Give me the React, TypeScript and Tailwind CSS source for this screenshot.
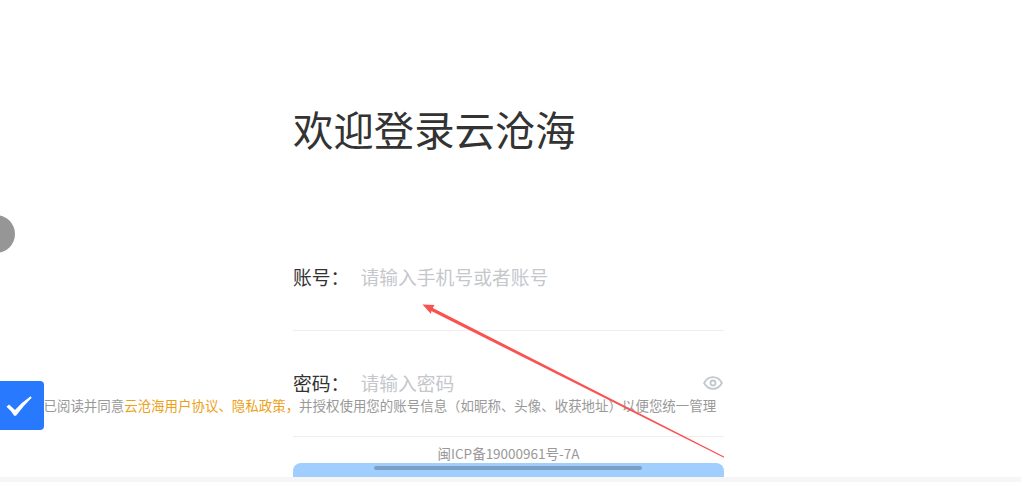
type FieldProps = {
  label: string;
  placeholder: string;
  password?: boolean;
};

function EyeIcon() {
  return (
    <svg className="h-[14px] w-[20px]" viewBox="0 0 20 14" fill="none" stroke="#c3c6cd" strokeWidth="1.8">
      <path d="M1.1 7C3.2 3.200 6.200 1.100 10 1.100S16.800 3.200 18.900 7C16.800 10.800 13.800 12.900 10 12.900S3.200 10.800 1.100 7Z" />
      <circle cx="10" cy="7" r="2.5" />
    </svg>
  );
}

function Field({ label, placeholder, password }: FieldProps) {
  return (
    <label className="flex h-[106px] w-full items-center border-b border-[#eeeeee] text-[18.8px] leading-7">
      <span className="w-[67.500px] shrink-0 whitespace-nowrap text-[#333333]">{label}</span>
      <input
        type={password ? "password" : "text"}
        placeholder={placeholder}
        className="h-7 min-w-0 flex-1 bg-transparent outline-none placeholder:text-[#c5c7cc]"
      />
      {password && (
        <span className="mr-[1px]">
          <EyeIcon />
        </span>
      )}
    </label>
  );
}

export default function App() {
  return (
    <div className="h-[482px] w-[1021px] overflow-hidden bg-[#f6f6f6] font-['Noto_Sans_CJK_SC',sans-serif]">
      <main className="relative h-[477px] overflow-hidden bg-white">
        <div className="ml-[293px] flex w-[431px] flex-col pt-[105px]">
          <h1 className="whitespace-nowrap text-[40.4px] font-normal leading-[48px] text-[#333333]">欢迎登录云沧海</h1>
          <form className="mt-[71.600px]">
            <Field label="账号：" placeholder="请输入手机号或者账号" />
            <Field label="密码：" placeholder="请输入密码" password />
          </form>
          <p className="mt-[6.800px] text-center text-[13.5px] leading-5 text-[#999999]">闽ICP备19000961号-7A</p>
          <button type="button" aria-label="登录" className="h-12 rounded-[8px] bg-[#a0cfff]" />
        </div>

        <div className="absolute left-[-23px] top-[215px] size-[38px] rounded-full bg-[#969696]" />

        <div className="absolute left-[-5px] top-[381px] flex items-center">
          <span className="flex h-[49px] w-[48.500px] items-center justify-center rounded-[4px] bg-[#2979ff]">
            <svg className="h-[24px] w-[28px]" viewBox="0 0 28 24">
              <path d="M1.500 12.800 L4 10.500 L10 16 Q17 8 25.600 2.200 L26.700 3.700 Q18.500 11.500 11 21.800 H9.200 Q6 16.500 1.500 12.800Z" fill="#fff" />
            </svg>
          </span>
          <p className="-mt-[1px] whitespace-nowrap text-[13.460px] leading-5 text-[#999999]">
            已阅读并同意<span className="text-[#eca019]">云沧海用户协议、隐私政策，</span>并授权使用您的账号信息（如昵称、头像、收获地址）以便您统一管理
          </p>
        </div>

        <div className="absolute left-[374px] top-[466px] h-1 w-[268px] rounded-full bg-[#7d9fc3]" />

        <svg className="pointer-events-none absolute left-[420px] top-[300px] h-[160px] w-[304px]" viewBox="0 0 304 160">
          <path d="M2.500 4.500 L14.500 5 L12.800 8 L304 156.400 L304 157.700 L11.300 11 L11 14 Z" fill="#fa5151" />
        </svg>
      </main>
    </div>
  );
}
